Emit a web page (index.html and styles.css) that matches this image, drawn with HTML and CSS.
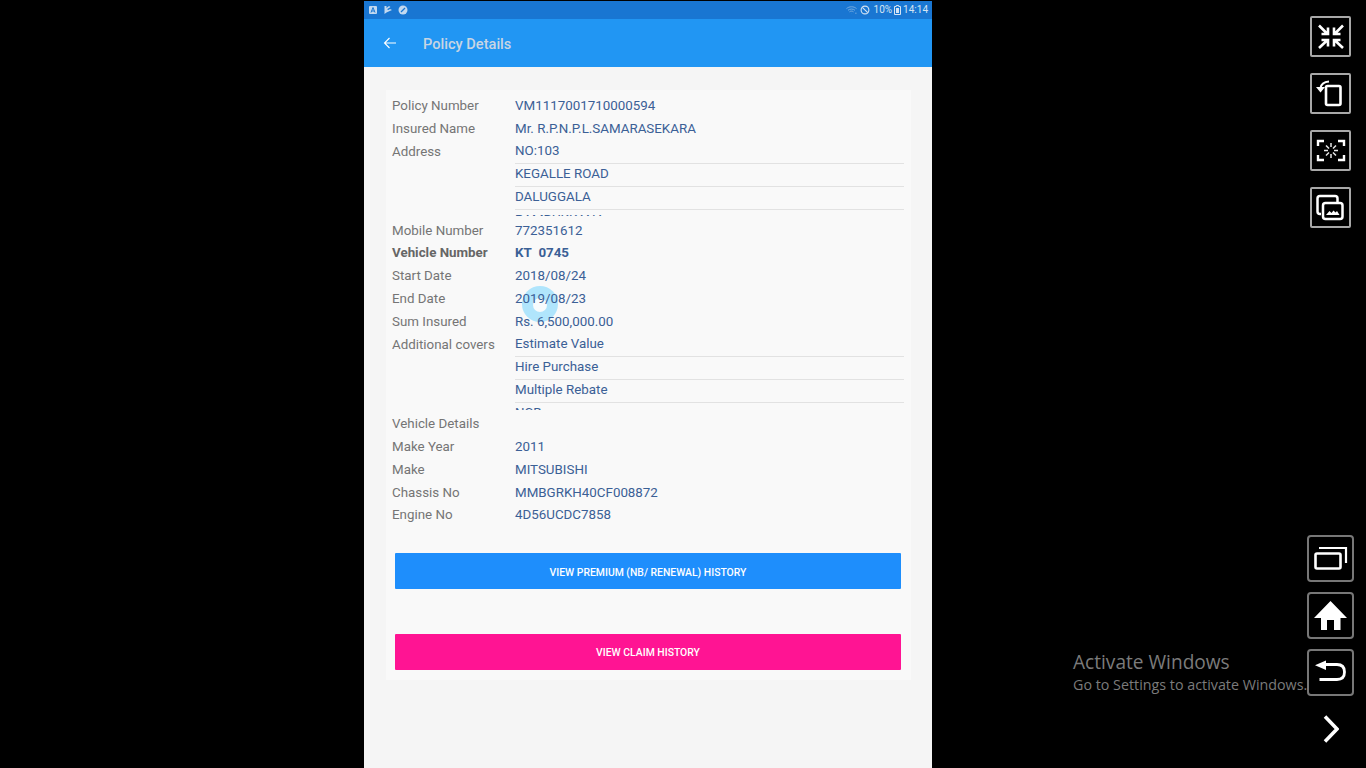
FILE: index.html
```html
<!DOCTYPE html>
<html lang="en">
<head>
<meta charset="utf-8">
<title>Policy Details</title>
<link rel="stylesheet" href="styles.css">
</head>
<body>
<div class="desktop">
  <main class="phone">
    <div class="statusbar">
      <div class="status-left">
        <svg class="si" viewBox="0 0 10 10"><rect x="1" y="1" width="8" height="8" rx="1" fill="#c3d9f0"/><path d="M3 7.500 5 2.500 7 7.500M3.800 6h2.400" fill="none" stroke="#1976d2" stroke-width="1"/></svg>
        <svg class="si" viewBox="0 0 10 10"><path d="M1.500 1v8l2-1.500L9 5 7 4 5.500 5 4 4.200 7.500 2 6 1 3.500 3V1z" fill="#c3d9f0"/></svg>
        <svg class="si" viewBox="0 0 10 10"><circle cx="5" cy="5" r="4.500" fill="#c3d9f0"/><path d="M3 7 7 3" stroke="#1976d2" stroke-width="1.300"/></svg>
      </div>
      <div class="status-right">
        <svg class="wifi" viewBox="0 0 12 10"><path d="M.5 3.500C3.500.8 8.500.8 11.500 3.500M2.200 5.300C4.200 3.500 7.800 3.500 9.800 5.300M3.800 7C5 6 7 6 8.200 7M6 9v.1M10 8.500h1.500" fill="none" stroke="#7fb0e0" stroke-width="1"/></svg>
        <svg class="block" viewBox="0 0 10 10"><circle cx="5" cy="5" r="3.900" fill="none" stroke="#d6e4f3" stroke-width="1.100"/><path d="M2.300 2.300 7.700 7.700" stroke="#d6e4f3" stroke-width="1.100"/></svg>
        <span>10%</span>
        <svg class="batt" viewBox="0 0 7 10"><path d="M2.300.5h2.400v1H6.500v8h-6v-8h1.800z" fill="none" stroke="#d6e4f3" stroke-width="1"/><rect x="2" y="3" width="3" height="5" fill="#d6e4f3"/></svg>
        <span>14:14</span>
      </div>
    </div>
    <header class="appbar">
      <svg class="back" viewBox="0 0 14 12"><path d="M13 6H1.500M6.500 1 1.500 6l5 5" fill="none" stroke="#fff" stroke-width="1.100"/></svg>
      <h1 class="title">Policy Details</h1>
    </header>
    <section class="card">
      <div class="ripple"></div>
      <div class="rows">
        <div class="row"><span class="label">Policy Number</span><span class="value">VM1117001710000594</span></div>
        <div class="row"><span class="label">Insured Name</span><span class="value">Mr. R.P.N.P.L.SAMARASEKARA</span></div>
        <div class="row multi">
          <span class="label">Address</span>
          <div class="list">
            <div class="line">NO:103</div>
            <div class="line">KEGALLE ROAD</div>
            <div class="line">DALUGGALA</div>
            <div class="line">RAMBUKKANA</div>
          </div>
        </div>
        <div class="row"><span class="label">Mobile Number</span><span class="value">772351612</span></div>
        <div class="row strong"><span class="label">Vehicle Number</span><span class="value">KT&nbsp; 0745</span></div>
        <div class="row"><span class="label">Start Date</span><span class="value">2018/08/24</span></div>
        <div class="row"><span class="label">End Date</span><span class="value">2019/08/23</span></div>
        <div class="row"><span class="label">Sum Insured</span><span class="value">Rs. 6,500,000.00</span></div>
        <div class="row multi">
          <span class="label">Additional covers</span>
          <div class="list">
            <div class="line">Estimate Value</div>
            <div class="line">Hire Purchase</div>
            <div class="line">Multiple Rebate</div>
            <div class="line">NCB</div>
          </div>
        </div>
        <div class="row"><span class="label">Vehicle Details</span><span class="value"></span></div>
        <div class="row"><span class="label">Make Year</span><span class="value">2011</span></div>
        <div class="row"><span class="label">Make</span><span class="value">MITSUBISHI</span></div>
        <div class="row"><span class="label">Chassis No</span><span class="value">MMBGRKH40CF008872</span></div>
        <div class="row"><span class="label">Engine No</span><span class="value">4D56UCDC7858</span></div>
      </div>
      <div class="actions">
        <button class="btn btn-blue">VIEW PREMIUM (NB/ RENEWAL) HISTORY</button>
        <button class="btn btn-pink">VIEW CLAIM HISTORY</button>
      </div>
    </section>
  </main>
  <aside class="tools">
    <div class="tool-top">
      <div class="tool"><svg viewBox="0 0 41 41"><g fill="none" stroke="#fff" stroke-width="2.600"><path d="M9 9.500 17 17.500M11.500 18H18V11.500"/><path d="M33 9.500 25 17.500M30.500 18H24V11.500"/><path d="M9 32 17 24.500M11.500 24H18V30.500"/><path d="M33 32 25 24.500M30.500 24H24V30.500"/></g></svg></div>
      <div class="tool"><svg viewBox="0 0 41 41"><rect x="16" y="13" width="14.500" height="19" rx="1.500" fill="none" stroke="#fff" stroke-width="2.600"/><path d="M10.500 15C11 11.500 14 9 19 8.500" fill="none" stroke="#fff" stroke-width="2"/><path d="M6 14h9l-4.500 5.500z" fill="#fff"/></svg></div>
      <div class="tool"><svg viewBox="0 0 41 41"><g fill="none" stroke="#fff" stroke-width="2.400"><path d="M8 16V11H14M28 11H34V16M34 25V30H28M14 30H8V25"/></g><g fill="none" stroke="#e6e6e6" stroke-width="1.500"><path d="M21 13v4M21 24v4M14 20.500h4M24 20.500h4M16 15.500l3 3M26 15.500l-3 3M16 25.500l3-3M26 25.500l-3-3"/></g></svg></div>
      <div class="tool"><svg viewBox="0 0 41 41"><path d="M11 27H10a2.500 2.500 0 0 1-2.500-2.500v-13A2.500 2.500 0 0 1 10 9h15a2.500 2.500 0 0 1 2.500 2.500V15" fill="none" stroke="#fff" stroke-width="2.500"/><rect x="13" y="16" width="19.500" height="16" rx="2.500" fill="none" stroke="#fff" stroke-width="2.500"/><path d="M16 28l3.500-4 2 2 2-2.500 2 2 1.500-1.500 2.500 4z" fill="#fff"/></svg></div>
    </div>
    <div class="tool-bottom">
      <div class="tool big"><svg viewBox="0 0 47 47"><path d="M12 13H39V28" fill="none" stroke="#fff" stroke-width="2.200"/><rect x="8.500" y="18.500" width="25" height="15" rx="1.500" fill="none" stroke="#fff" stroke-width="2.600"/></svg></div>
      <div class="tool big"><svg viewBox="0 0 47 47"><path d="M23.500 9 7 26H14V38H20V28H27V38H33.500V26H40z" fill="#fff"/></svg></div>
      <div class="tool big"><svg viewBox="0 0 47 47"><path d="M18 15.500H30C35.500 15.500 37.500 19 37.500 23C37.500 27.500 35 30.500 30 30.500H12.500" fill="none" stroke="#fff" stroke-width="2.800"/><path d="M8 16.300 19 11.500V21z" fill="#fff"/></svg></div>
      <svg class="chevron" viewBox="0 0 16 28"><path d="M2 1.500 14 14 2 26.500" fill="none" stroke="#fff" stroke-width="3.500"/></svg>
    </div>
  </aside>
  <div class="activate">
    <div class="activate-title">Activate Windows</div>
    <div class="activate-sub">Go to Settings to activate Windows.</div>
  </div>
</div>
</body>
</html>
```
FILE: styles.css
```css
* { box-sizing: border-box; }
html, body { margin: 0; height: 100%; background: #000; overflow: hidden; }
body { font-family: Roboto, "Liberation Sans", sans-serif; }
.desktop { position: relative; display: flex; width: 1366px; height: 768px; padding-left: 364px; background: #000; }
.phone { width: 568px; height: 767px; margin-top: 1px; background: #f5f5f5; display: flex; flex-direction: column; }
.statusbar { height: 18px; background: #1976d2; display: flex; justify-content: space-between; align-items: center; padding: 0 4px 1px 4px; color: #d6e4f3; font-size: 10px; line-height: 10px; }
.status-left { display: flex; gap: 5px; align-items: center; }
.si { width: 10px; height: 10px; display: block; }
.status-right { display: flex; align-items: center; gap: 2px; }
.wifi { width: 11px; height: 10px; }
.block { width: 10px; height: 10px; margin: 0 2px 0 1px; }
.batt { width: 7px; height: 10px; }
.appbar { height: 48px; background: #2196f3; display: flex; align-items: center; padding-left: 19px; }
.back { width: 14px; height: 12px; margin-top: -1px; }
.title { margin: 1px 0 0 26px; font-size: 14.6px; font-weight: 500; color: #c8d5e3; line-height: 20px; }
.card { position: relative; margin: 23px 21px 0 22px; height: 590px; background: #f9f9f9; padding: 4.9px 6px 0; }
.ripple { position: absolute; left: 136px; top: 196px; width: 36px; height: 36px; border-radius: 50%; background: #b0e5fc; }
.ripple::after { content: ""; position: absolute; left: 11px; top: 12px; width: 14px; height: 14px; border-radius: 50%; background: #f7fbfd; }
.rows { position: relative; }
.row { display: flex; height: 22.9px; line-height: 22.9px; font-size: 13.35px; }
.label { width: 123px; flex: none; color: #757575; }
.value { color: #3b6096; }
.strong { font-weight: 700; }
.strong .label { color: #666; }
.multi { overflow: hidden; height: 75.8px; margin-bottom: 3.1px; }
.list { flex: 1; min-width: 0; margin-top: -0.7px; }
.line { height: 22.9px; line-height: 22.2px; color: #3b6096; box-shadow: 0 1px 0 #e2e2e2; margin-right: 1px; }
.actions { display: flex; flex-direction: column; gap: 44.6px; margin: 25.9px 4px 0 3px; }
.btn { display: block; height: 36px; width: 100%; border: 0; padding: 2px 0 0; border-radius: 1px; font-family: inherit; font-size: 10.4px; font-weight: 500; color: #fff; }
.btn-blue { background: #1e8efc; }
.btn-pink { background: #ff1493; }
.tools { flex: 1; display: flex; flex-direction: column; justify-content: space-between; align-items: flex-end; padding: 16px 12px 25px 0; position: relative; z-index: 1; }
.tool-top { display: flex; flex-direction: column; gap: 16px; margin-right: 3px; }
.tool-bottom { display: flex; flex-direction: column; gap: 10px; align-items: center; }
.tool { width: 41px; height: 41px; border: 2px solid #a8a8a8; border-radius: 2px; position: relative; background: #000; }
.tool svg { position: absolute; left: -2px; top: -2px; width: 41px; height: 41px; }
.tool.big { width: 47px; height: 47px; border-color: #777; border-radius: 4px; }
.tool.big svg { width: 47px; height: 47px; }
.chevron { width: 16px; height: 28px; margin-top: 9px; display: block; }
.activate { position: absolute; left: 1073px; top: 650px; color: #7b7b7b; font-family: "Open Sans", "Noto Sans", sans-serif; white-space: nowrap; }
.activate-title { font-size: 19.1px; line-height: 24px; }
.activate-sub { font-size: 14.3px; line-height: 21px; }
```
